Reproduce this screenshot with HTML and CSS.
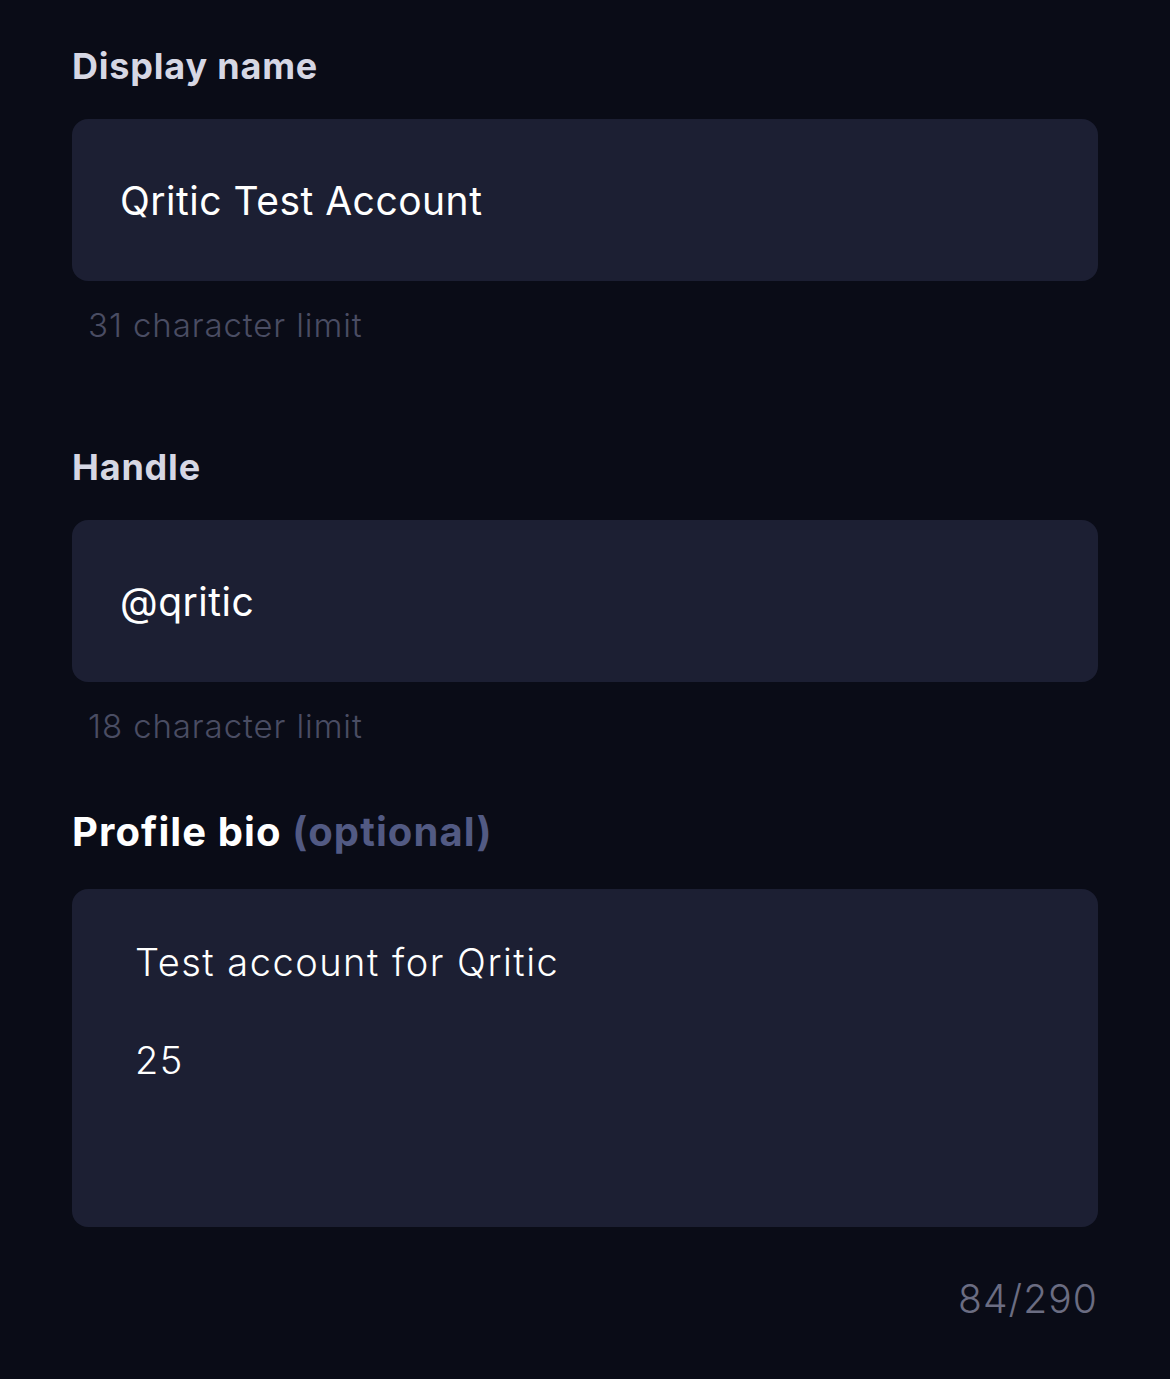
FILE: index.html
```html
<!DOCTYPE html>
<html lang="en">
<head>
<meta charset="utf-8">
<title>Edit profile</title>
<link rel="stylesheet" href="styles.css">
</head>
<body>
<main class="form">
  <section class="field">
    <label class="label">Display name</label>
    <div class="input">Qritic Test Account</div>
    <p class="hint">31 character limit</p>
  </section>
  <section class="field field-handle">
    <label class="label">Handle</label>
    <div class="input">@qritic</div>
    <p class="hint">18 character limit</p>
  </section>
  <section class="field field-bio">
    <label class="label label-big">Profile bio <span class="optional">(optional)</span></label>
    <div class="textarea">
      <p class="bio-line">Test account for Qritic</p>
      <p class="bio-line bio-gap">25</p>
    </div>
    <p class="counter">84/290</p>
  </section>
</main>
</body>
</html>
```

FILE: styles.css
```css
html, body {
  margin: 0;
  padding: 0;
  background: #0a0c17;
}
body {
  width: 1170px;
  height: 1379px;
  overflow: hidden;
  font-family: "Inter", "Lato", sans-serif;
  font-variant-ligatures: none;
}
.form {
  padding: 44px 72px 0 72px;
  width: 1026px;
}
.field {
  display: flex;
  flex-direction: column;
}
.label {
  display: block;
  font-size: 36px;
  line-height: 44px;
  font-weight: 700;
  color: #d6d7e4;
  letter-spacing: 0.8px;
}
.label-big {
  font-size: 40px;
  line-height: 48px;
  color: #ffffff;
  letter-spacing: 1.1px;
}
.optional {
  color: #525a83;
}
.input {
  margin-top: 31px;
  height: 162px;
  box-sizing: border-box;
  background: #1c1f33;
  border-radius: 16px;
  padding-left: 48px;
  display: flex;
  align-items: center;
  font-size: 39px;
  font-weight: 400;
  letter-spacing: 0.5px;
  color: #ffffff;
}
.hint {
  margin: 24px 0 0 16px;
  font-size: 33px;
  line-height: 40px;
  font-weight: 300;
  letter-spacing: 0.9px;
  color: #4a4d63;
}
.field-handle {
  margin-top: 100px;
}
.field-bio {
  margin-top: 62px;
}
.textarea {
  margin-top: 33px;
  height: 338px;
  box-sizing: border-box;
  background: #1c1f33;
  border-radius: 16px;
  padding: 49px 0 0 63px;
  font-size: 38px;
  line-height: 49px;
  font-weight: 300;
  letter-spacing: 1.5px;
  color: #ffffff;
}
.bio-line {
  margin: 0;
}
.bio-gap {
  margin-top: 49px;
}
.counter {
  margin: 48px 0 0 0;
  text-align: right;
  font-size: 39px;
  line-height: 48px;
  font-weight: 300;
  letter-spacing: 1.1px;
  color: #6b6d82;
}
```
